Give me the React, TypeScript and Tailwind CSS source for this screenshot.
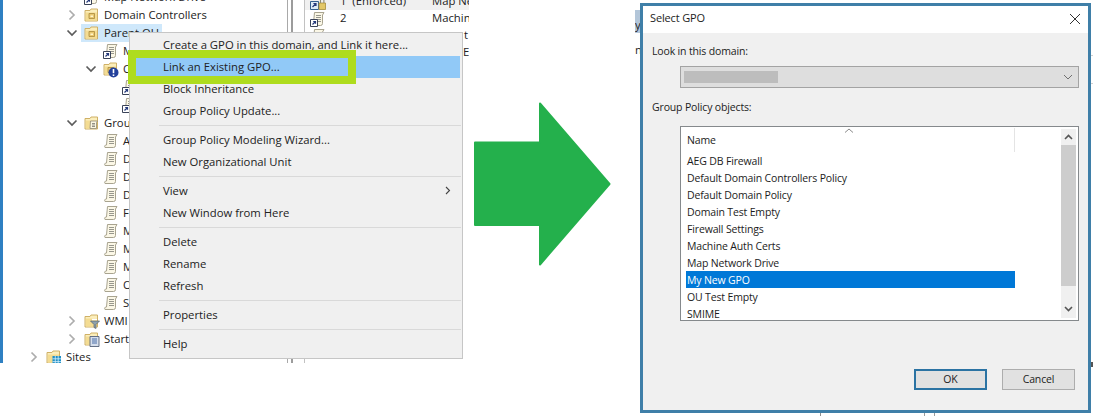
const ui = { fontFamily: '"Open Sans", "Noto Sans", sans-serif' };

function Chevron({ open }: { open?: boolean }) {
  return (
    <span className="flex w-[18px] shrink-0 items-center">
      <svg width="12" height="12" viewBox="0 0 12 12" fill="none">
        {open ? (
          <path d="M1.5 3.5 L6 8 L10.5 3.5" stroke="#5c5c5c" strokeWidth="1.7" />
        ) : (
          <path d="M3.5 1.5 L8 6 L3.5 10.5" stroke="#adadad" strokeWidth="1.7" />
        )}
      </svg>
    </span>
  );
}

function Folder({ children }: { children?: React.ReactNode }) {
  return (
    <svg width="16" height="16" viewBox="0 0 16 16" className="shrink-0">
      <path d="M1 3.5 h5 l1 -1.5 h6.5 v12 h-12.5 z" fill="#fbeebb" stroke="#cfb066" strokeWidth="1" />
      <path d="M2 5.5 h11 v8 h-11 z" fill="#f4dc92" />
      {children}
    </svg>
  );
}

function OuIcon({ warn }: { warn?: boolean }) {
  return (
    <span className="relative h-4 w-4 shrink-0">
      <Folder>
        <path d="M5 6.5 h5.5 v5 h-5.5 z" fill="#e9c870" stroke="#a98a3e" strokeWidth="0.8" />
        <path d="M6.5 8.5 h2.5 v1.5 h-2.5 z" fill="#fff6cf" />
      </Folder>
      {warn && (
        <svg width="11" height="11" viewBox="0 0 11 11" className="absolute left-[5px] top-[6px]">
          <circle cx="5.5" cy="5.5" r="5" fill="#23419c" />
          <path d="M5.5 2 v4.2" stroke="#fff" strokeWidth="1.6" />
          <path d="M5.5 7.4 v1.6" stroke="#fff" strokeWidth="1.6" />
        </svg>
      )}
    </span>
  );
}

function Scroll({ link }: { link?: boolean }) {
  return (
    <svg width="16" height="16" viewBox="0 0 16 16" className="shrink-0">
      <path d="M4.5 1.5 h9.5 l-1.5 2.5 v8.5 q0 2 -2 2 h-8.5 q-1 -1.5 0.5 -2.5 h1 z" fill="#fbf7e6" stroke="#a8a38f" strokeWidth="1" />
      <path d="M6 4.5 h5 M6 6.5 h5 M6 8.5 h5 M6 10.5 h5" stroke="#97978d" strokeWidth="1" />
      {link && (
        <g>
          <path d="M0.5 8.5 h7 v7 h-7 z" fill="#fff" stroke="#3a4358" strokeWidth="1" />
          <path d="M2.5 13.5 L5.5 10.5 M3.2 10.5 h2.3 v2.3" stroke="#23387a" strokeWidth="1.2" fill="none" />
        </g>
      )}
    </svg>
  );
}

function LockLink() {
  return (
    <svg width="16" height="16" viewBox="0 0 16 16" className="shrink-0">
      <path d="M0.5 7.5 h8 v8 h-8 z" fill="#dcebf7" stroke="#34608f" strokeWidth="1" />
      <path d="M2.5 13 L6 9.5 M3.4 9.5 h2.6 v2.6" stroke="#23387a" strokeWidth="1.2" fill="none" />
      <path d="M9 9 h6.5 v6.5 h-6.5 z" fill="#e3c766" stroke="#a68d3a" strokeWidth="0.8" />
      <path d="M10.5 9 v-3 q0 -1.5 1.7 -1.5 q1.7 0 1.7 1.5 v3" fill="none" stroke="#8e8a72" strokeWidth="1.1" />
    </svg>
  );
}

function GroupIcon() {
  return (
    <Folder>
      <path d="M6.5 6 h7 l-1 1.5 v6 h-6.5 z" fill="#fbf6e2" stroke="#8f8a76" strokeWidth="0.8" />
      <path d="M8 8.5 h3 M8 10 h3 M8 11.5 h3" stroke="#77776f" strokeWidth="0.8" />
    </Folder>
  );
}

function WmiIcon() {
  return (
    <Folder>
      <path d="M6.5 8 h9 l-3.5 3.5 v4 l-2 -1 v-3 z" fill="#8ea1ad" stroke="#56636d" strokeWidth="0.7" />
      <path d="M8 6.5 h5" stroke="#fff" strokeWidth="1.4" />
    </Folder>
  );
}

function StarterIcon() {
  return (
    <Folder>
      <path d="M6 5.5 h9 v10 h-9 z" fill="#d5deec" stroke="#55627a" strokeWidth="0.9" />
      <path d="M8 8 h5 M8 10 h5 M8 12 h5" stroke="#4b6fa8" strokeWidth="1" />
    </Folder>
  );
}

function SitesIcon() {
  return (
    <Folder>
      <path d="M6.5 7 h8.5 v8.5 h-8.5 z" fill="#1f8fc6" />
      <path d="M9.3 7 v8.5 M12.2 7 v8.5 M6.5 9.8 h8.5 M6.5 12.6 h8.5" stroke="#d7f0fb" strokeWidth="0.8" />
    </Folder>
  );
}

type Row = { label: string; level: number; chevron?: "open" | "closed"; icon: React.ReactNode; selected?: boolean };

const treeRows: Row[] = [
  { label: "Map Network Drive", level: 1, icon: <Scroll link /> },
  { label: "Domain Controllers", level: 1, chevron: "closed", icon: <OuIcon /> },
  { label: "Parent OU", level: 1, chevron: "open", icon: <OuIcon />, selected: true },
  { label: "My New GPO", level: 2, icon: <Scroll link /> },
  { label: "OU Test", level: 2, chevron: "open", icon: <OuIcon warn /> },
  { label: "Map Network Drive", level: 3, icon: <Scroll link /> },
  { label: "Machine Auth Certs", level: 3, icon: <Scroll link /> },
  { label: "Group Policy Objects", level: 1, chevron: "open", icon: <GroupIcon /> },
  { label: "AEG DB Firewall", level: 2, icon: <Scroll /> },
  { label: "Default Domain Controllers Policy", level: 2, icon: <Scroll /> },
  { label: "Default Domain Policy", level: 2, icon: <Scroll /> },
  { label: "Domain Test Empty", level: 2, icon: <Scroll /> },
  { label: "Firewall Settings", level: 2, icon: <Scroll /> },
  { label: "Machine Auth Certs", level: 2, icon: <Scroll /> },
  { label: "Map Network Drive", level: 2, icon: <Scroll /> },
  { label: "My New GPO", level: 2, icon: <Scroll /> },
  { label: "OU Test Empty", level: 2, icon: <Scroll /> },
  { label: "SMIME", level: 2, icon: <Scroll /> },
  { label: "WMI Filters", level: 1, chevron: "closed", icon: <WmiIcon /> },
  { label: "Starter GPOs", level: 1, chevron: "closed", icon: <StarterIcon /> },
  { label: "Sites", level: 0, chevron: "closed", icon: <SitesIcon /> },
];

const levelPad = ["pl-[25px]", "pl-[63px]", "pl-[82px]", "pl-[101px]"];

function TreeRow({ row }: { row: Row }) {
  return (
    <div className={`flex h-[18px] items-center whitespace-nowrap ${levelPad[row.level]}`}>
      {row.chevron ? <Chevron open={row.chevron === "open"} /> : <span className="w-[18px] shrink-0" />}
      <span className={`flex h-[18px] items-center ${row.selected ? "-ml-[3px] bg-[#cfe8fb] pl-[3px] pr-[4px] w-[81px]" : ""}`}>
        {row.icon}
        <span className="ml-[4px]">{row.label}</span>
      </span>
    </div>
  );
}

const menu: (string | null)[] = [
  "Create a GPO in this domain, and Link it here...",
  "Link an Existing GPO...",
  "Block Inheritance",
  "Group Policy Update...",
  null,
  "Group Policy Modeling Wizard...",
  "New Organizational Unit",
  null,
  "View",
  "New Window from Here",
  null,
  "Delete",
  "Rename",
  "Refresh",
  null,
  "Properties",
  null,
  "Help",
];

function ContextMenu() {
  return (
    <div className="absolute left-[129px] top-[32px] h-[327px] w-[334px] border border-[#c6c6c6] bg-[#f0f0f0] pt-[1px] text-[#222]">
      {menu.map((m, i) =>
        m === null ? (
          <div key={i} className="my-[3px] ml-[29px] mr-[1px] h-px bg-[#d9d9d9]" />
        ) : (
          <div
            key={i}
            className={`relative ml-[5px] mr-[2px] flex h-[22px] items-center pl-[28px] ${m.startsWith("Link") ? "bg-[#91c9f7]" : ""}`}
          >
            {m}
            {m === "View" && (
              <svg width="6" height="9" viewBox="0 0 6 9" className="absolute right-[9px] top-[6px]" fill="none">
                <path d="M1 1 L4.5 4.5 L1 8" stroke="#444" strokeWidth="1.1" />
              </svg>
            )}
          </div>
        )
      )}
      <div className="absolute left-[-2px] top-[17px] h-[34px] w-[228px] border-[8px] border-[#aedc1e]" />
    </div>
  );
}

const gpos = [
  "AEG DB Firewall",
  "Default Domain Controllers Policy",
  "Default Domain Policy",
  "Domain Test Empty",
  "Firewall Settings",
  "Machine Auth Certs",
  "Map Network Drive",
  "My New GPO",
  "OU Test Empty",
  "SMIME",
];

function Dialog() {
  return (
    <div className="absolute left-[640px] top-[3px] flex h-[410px] w-[451px] flex-col border-[3px] border-[#3f7fa8] bg-[#f0f0f0] text-[10.5px] tracking-[-0.15px] text-[#1c1c1c]">
      <div className="flex h-[27px] shrink-0 items-center justify-between bg-white pb-[2px] pl-[7px] pr-[7px]">
        <span className="text-[11px]">Select GPO</span>
        <svg width="12" height="12" viewBox="0 0 12 12" fill="none">
          <path d="M1 1 L11 11 M11 1 L1 11" stroke="#333" strokeWidth="1" />
        </svg>
      </div>
      <div className="flex flex-1 flex-col pl-[9px] pr-[13px] pt-[10px]">
        <div className="h-4 leading-4">Look in this domain:</div>
        <div className="ml-[28px] mt-[7px] flex h-[22px] w-[399px] items-center justify-between border border-[#a3a3a3] bg-[#dedede] pl-[3px] pr-[5px]">
          <div className="h-[12px] w-[94px] bg-[#bdbdbd]" />
          <svg width="10" height="6" viewBox="0 0 10 6" fill="none">
            <path d="M1 1 L5 5 L9 1" stroke="#707070" strokeWidth="1" />
          </svg>
        </div>
        <div className="mt-[11px] h-4 leading-4">Group Policy objects:</div>
        <div className="relative ml-[28px] mt-[11px] flex h-[195px] w-[399px] border border-[#85898c] bg-white">
          <div className="min-w-0 flex-1 overflow-hidden">
            <div className="relative flex h-[25px] items-center pl-[6px] pt-[2px]">
              Name
              <svg width="10" height="5" viewBox="0 0 10 5" className="absolute left-[163px] top-[1px]" fill="none">
                <path d="M1 4.5 L5 1 L9 4.5" stroke="#8a8a8a" strokeWidth="1" />
              </svg>
              <div className="absolute bottom-0 left-[333px] top-[1px] w-px bg-[#e4e4e4]" />
            </div>
            {gpos.map((g) => (
              <div
                key={g}
                className={`ml-[5px] flex h-[17px] w-[329px] items-center pl-[1px] pt-[2px] ${g === "My New GPO" ? "bg-[#0078d7] text-white" : ""}`}
              >
                {g}
              </div>
            ))}
          </div>
          <div className="my-[2px] mr-[2px] flex w-[15px] shrink-0 flex-col bg-[#f0f0f0]">
            <div className="flex h-[16px] items-center justify-center">
              <svg width="9" height="6" viewBox="0 0 9 6" fill="none">
                <path d="M1 5 L4.5 1.5 L8 5" stroke="#555" strokeWidth="1.6" />
              </svg>
            </div>
            <div className="h-[141px] bg-[#cdcdcd]" />
            <div className="flex flex-1 items-end justify-center pb-[6px]">
              <svg width="9" height="6" viewBox="0 0 9 6" fill="none">
                <path d="M1 1 L4.5 4.5 L8 1" stroke="#555" strokeWidth="1.6" />
              </svg>
            </div>
          </div>
        </div>
        <div className="mt-[48px] flex justify-end gap-[15px]">
          <button className="h-[21px] w-[73px] border-2 border-[#2b73a3] bg-[#e1e1e1] text-[#1c1c1c]">OK</button>
          <button className="h-[21px] w-[73px] border border-[#adadad] bg-[#e1e1e1] text-[#1c1c1c]">Cancel</button>
        </div>
      </div>
    </div>
  );
}

const tableRows = [
  { id: "1", order: "1  (Enforced)", name: "Map Network Drive", bg: "bg-[#f0f0f0]", icon: <LockLink />, nameClass: "" },
  { id: "2", order: "2", name: "Machine Auth Certs", bg: "", icon: <Scroll link />, nameClass: "" },
  { id: "3", order: "", name: "t", bg: "", icon: <Scroll link />, nameClass: "pl-[32px]" },
  { id: "4", order: "", name: "E", bg: "", icon: <Scroll link />, nameClass: "pl-[31px]" },
];

export default function App() {
  return (
    <div className="relative h-[416px] w-[1093px] overflow-hidden bg-white text-[11.3px] text-[#222]" style={ui}>
      <div className="flex h-[363px] w-[469px] overflow-hidden border-l-[3px] border-[#2f80c2]">
        <div className="-mt-[12px] w-[284px] shrink-0">
          {treeRows.map((r, i) => (
            <TreeRow key={i} row={r} />
          ))}
        </div>
        <div className="flex w-[18px] shrink-0 pl-0">
          <div className="h-full w-px bg-[#a9a9a9]" />
          <div className="ml-[3px] h-full w-[2px] bg-[#9c9c9c]" />
          <div className="ml-auto h-full w-px bg-[#c2c2c2]" />
        </div>
        <div className="-mt-[7px] min-w-0 flex-1 overflow-hidden">
          {tableRows.map((r) => (
            <div key={r.id} className={`flex h-[17px] items-center whitespace-nowrap ${r.bg}`}>
              <span className="ml-[5px] w-[30px] shrink-0">{r.icon}</span>
              <span className="w-[92px] shrink-0 whitespace-pre">{r.order}</span>
              <span className={`shrink-0 ${r.nameClass}`}>{r.name}</span>
            </div>
          ))}
        </div>
      </div>

      <ContextMenu />

      <svg width="137" height="164" viewBox="0 0 137 164" className="absolute left-[474px] top-[102px]">
        <path
          d="M1 40.5 H66 V1.5 L135.5 82 L66 162.5 V123 H1 Z"
          fill="#24b04c"
          stroke="#24b04c"
          strokeWidth="2"
          strokeLinejoin="round"
        />
      </svg>

      <div className="absolute left-[635px] top-[10px] flex h-[23px] w-[5px] items-end overflow-hidden bg-[#b3c6d9] leading-[16px]">y</div>
      <div className="absolute left-[635px] top-[42px] w-[5px] overflow-hidden leading-[16px]">n</div>
      <div className="absolute left-[820px] top-[413px] h-[3px] w-px bg-[#8f8f8f]" />
      <div className="absolute left-[924px] top-[413px] h-[3px] w-[11px] border-x border-[#9a9a9a]" />
      <div className="absolute left-[942px] top-[412px] leading-[16px]">Firewall Settings</div>
      <div className="absolute left-[1091px] top-[55px] h-px w-[2px] bg-[#d0d0d0]" />
      <div className="absolute left-[1091px] top-[83px] h-px w-[2px] bg-[#d0d0d0]" />
      <div className="absolute left-[1091px] top-[362px] h-[5px] w-[2px] bg-[#555]" />
      <Dialog />
    </div>
  );
}
